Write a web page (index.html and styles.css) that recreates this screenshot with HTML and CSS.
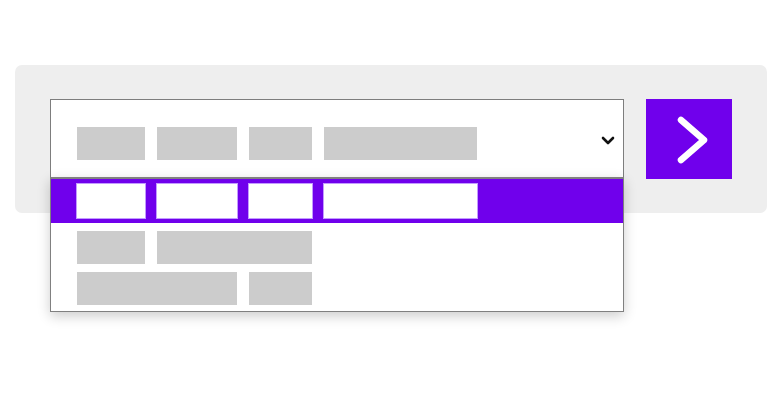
FILE: index.html
```html
<!DOCTYPE html>
<html lang="en">
<head>
  <meta charset="UTF-8">
  <title>Dropdown picker</title>
  <link rel="stylesheet" href="styles.css">
</head>
<body>
  <div class="panel">
    <div class="picker">
      <div class="select">
        <div class="line">
          <span class="bar w68"></span>
          <span class="bar w80"></span>
          <span class="bar w63"></span>
          <span class="bar w153"></span>
        </div>
        <svg class="caret" width="14" height="9" viewBox="0 0 14 9">
          <polyline points="2,2 7,7 12,2" fill="none" stroke="#111" stroke-width="2.6" stroke-linecap="round" stroke-linejoin="round"/>
        </svg>
      </div>
      <div class="options">
        <div class="option active">
          <span class="bar w68"></span>
          <span class="bar w80"></span>
          <span class="bar w63"></span>
          <span class="bar w153"></span>
        </div>
        <div class="rest">
          <div class="option">
            <span class="bar w68"></span>
            <span class="bar w155"></span>
          </div>
          <div class="option">
            <span class="bar w160"></span>
            <span class="bar w63"></span>
          </div>
        </div>
      </div>
    </div>
    <button class="go" aria-label="Go">
      <svg width="86" height="80" viewBox="0 0 86 80">
        <polyline points="35,21 58,41 35,61" fill="none" stroke="#fff" stroke-width="6.5" stroke-linecap="round" stroke-linejoin="round"/>
      </svg>
    </button>
  </div>
</body>
</html>
```

FILE: styles.css
```css
html, body { height: 100%; }
body {
  margin: 0;
  padding: 65px 15px 0;
  box-sizing: border-box;
  background: #ffffff;
  font-family: 'Liberation Sans', Arial, sans-serif;
}
.panel {
  width: 752px;
  height: 148px;
  box-sizing: border-box;
  padding: 34px 0 0 35px;
  background: #eeeeee;
  border-radius: 7px;
  display: flex;
  align-items: flex-start;
  gap: 22px;
}
.picker { position: relative; width: 574px; }
.select {
  height: 80px;
  box-sizing: border-box;
  border: 1px solid #7d7d7d;
  background: #fff;
  display: flex;
  align-items: flex-start;
  padding: 27px 8px 0 26px;
}
.line { display: flex; gap: 12px; }
.caret { margin-left: auto; margin-top: 9px; }
.bar { display: block; height: 33px; background: #cccccc; }
.w63 { width: 63px; }
.w68 { width: 68px; }
.w80 { width: 80px; }
.w153 { width: 153px; }
.w155 { width: 155px; }
.w160 { width: 160px; }

.options {
  position: absolute;
  z-index: 2;
  left: 0;
  top: 78px;
  width: 574px;
  box-sizing: border-box;
  border: 1px solid #808080;
  border-top-width: 2px;
  background: #fff;
  box-shadow: 0 4px 12px rgba(0, 0, 0, 0.2);
}
.option { display: flex; gap: 12px; }
.option.active {
  height: 44px;
  box-sizing: border-box;
  padding: 4px 0 0 25px;
  gap: 10px;
  background: #7000ec;
}
.option.active .bar {
  height: 34px;
  background: #fff;
  border: 1px solid #c39bff;
}
.rest {
  display: flex;
  flex-direction: column;
  gap: 8px;
  padding: 8px 0 6px 26px;
}
.go {
  width: 86px;
  height: 80px;
  padding: 0;
  border: none;
  background: #7000ec;
  cursor: pointer;
}
.go svg { display: block; }
```
